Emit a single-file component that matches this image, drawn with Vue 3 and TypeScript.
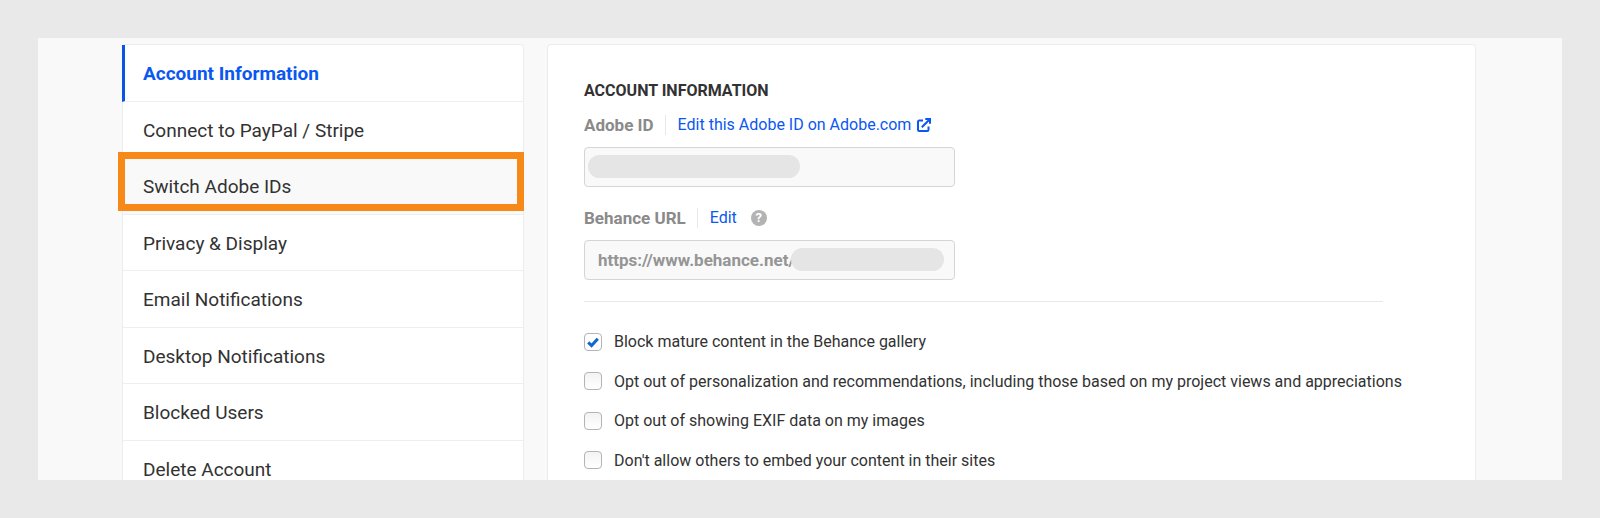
<script setup lang="ts">
import { ref } from 'vue'

interface NavItem {
  label: string
  state?: 'active' | 'highlighted'
}

interface Preference {
  id: string
  label: string
  checked: boolean
}

const navItems: NavItem[] = [
  { label: 'Account Information', state: 'active' },
  { label: 'Connect to PayPal / Stripe' },
  { label: 'Switch Adobe IDs', state: 'highlighted' },
  { label: 'Privacy & Display' },
  { label: 'Email Notifications' },
  { label: 'Desktop Notifications' },
  { label: 'Blocked Users' },
  { label: 'Delete Account' },
]

const preferences = ref<Preference[]>([
  { id: 'mature', label: 'Block mature content in the Behance gallery', checked: true },
  {
    id: 'personalization',
    label: 'Opt out of personalization and recommendations, including those based on my project views and appreciations',
    checked: false,
  },
  { id: 'exif', label: 'Opt out of showing EXIF data on my images', checked: false },
  { id: 'embed', label: "Don't allow others to embed your content in their sites", checked: false },
])
</script>

<template>
  <div class="stage">
    <div class="page">
      <nav class="card sidebar">
        <ul class="nav-list">
          <li v-for="item in navItems" :key="item.label" class="nav-item" :class="item.state">
            <a href="#" class="nav-link">{{ item.label }}</a>
          </li>
        </ul>
      </nav>

      <main class="card content">
        <h1 class="title">Account Information</h1>

        <div class="field">
          <div class="field-head">
            <label for="adobe-id" class="field-label">Adobe ID</label>
            <a href="#" class="link">
              Edit this Adobe ID on Adobe.com
              <svg class="external" viewBox="0 0 14 14" aria-hidden="true">
                <path d="M6 2.5H2.2a1.2 1.2 0 0 0-1.2 1.2v8.1A1.2 1.2 0 0 0 2.2 13h8.1a1.2 1.2 0 0 0 1.2-1.2V8.5" />
                <path d="M4.8 9.2 12 2" />
                <path d="M8.3 1H13v4.7" />
              </svg>
            </a>
          </div>
          <div class="input-wrap">
            <input id="adobe-id" class="input" type="text" readonly />
            <span class="mask mask-id"></span>
          </div>
        </div>

        <div class="field">
          <div class="field-head">
            <label for="behance-url" class="field-label">Behance URL</label>
            <a href="#" class="link">Edit</a>
            <button type="button" class="help" aria-label="Help">?</button>
          </div>
          <div class="input-wrap">
            <input id="behance-url" class="input" type="text" value="https://www.behance.net/" readonly />
            <span class="mask mask-url"></span>
          </div>
        </div>

        <hr class="rule" />

        <ul class="prefs">
          <li v-for="pref in preferences" :key="pref.id" class="pref">
            <input :id="pref.id" v-model="pref.checked" class="check" type="checkbox" />
            <svg v-if="pref.checked" class="tick" viewBox="0 0 18 18" aria-hidden="true">
              <path d="M4.2 9.3 7.6 12.6 13.8 5.8" />
            </svg>
            <label :for="pref.id">{{ pref.label }}</label>
          </li>
        </ul>
      </main>
    </div>
  </div>
</template>

<style>
body {
  margin: 0;
  background: #e9e9e9;
}
</style>

<style scoped>
.stage {
  box-sizing: border-box;
  height: 100vh;
  padding: 38px;
  background: #e9e9e9;
  color: #323232;
  font-family: Roboto, "Liberation Sans", sans-serif;
  font-size: 16px;
}

.page {
  box-sizing: border-box;
  display: flex;
  gap: 23px;
  height: 100%;
  padding: 6px 86px 0 84px;
  background: #f9f9f9;
  overflow: hidden;
}

.card {
  box-sizing: border-box;
  background: #fff;
  border: 1px solid #ececec;
  border-bottom: 0;
  border-radius: 4px 4px 0 0;
}

.sidebar {
  flex: 0 0 402px;
}

.nav-list {
  display: grid;
  grid-auto-rows: 1fr;
  min-height: 452px;
  margin: 0;
  padding: 0;
  list-style: none;
}

.nav-item {
  position: relative;
  display: flex;
  border-bottom: 1px solid #eeeeee;
}

.nav-link {
  flex: 1;
  display: flex;
  align-items: center;
  padding: 2px 20px 0;
  color: #323232;
  font-size: 19px;
  text-decoration: none;
}

.active {
  margin-left: -1px;
  border-left: 3px solid #0a55e8;
}

.active .nav-link {
  padding-left: 18px;
  color: #0a57f2;
  font-weight: 700;
}

.highlighted .nav-link {
  background: #f9f9f9;
}

/* Call-out frame drawn over the neighbouring rows. */
.highlighted::after {
  content: "";
  position: absolute;
  inset: -6px -1px 3px -5px;
  border: 7px solid #f68917;
  pointer-events: none;
}

.content {
  flex: 1;
  min-width: 0;
  padding: 35px 36px 0;
}

.title {
  margin: 0 0 12px;
  font-size: 16px;
  line-height: 22px;
  font-weight: 700;
  text-transform: uppercase;
}

.field {
  margin-bottom: 20px;
}

.field-head {
  display: flex;
  align-items: center;
  height: 22px;
  margin-bottom: 11px;
}

.field-label {
  margin-right: 11px;
  color: #8a8a8a;
  font-size: 17px;
  font-weight: 700;
}

.link {
  display: flex;
  align-items: center;
  gap: 6px;
  padding-left: 12px;
  border-left: 1px solid #e8e8e8;
  line-height: 20px;
  color: #0a57f2;
  text-decoration: none;
}

.external {
  width: 14px;
  height: 14px;
  fill: none;
  stroke: currentColor;
  stroke-width: 2;
}

.help {
  width: 16px;
  height: 16px;
  margin-left: 14px;
  padding: 0;
  border: 0;
  border-radius: 50%;
  background: #b3b3b3;
  color: #fff;
  font: 700 13px/16px Roboto, "Liberation Sans", sans-serif;
  text-align: center;
}

.input-wrap {
  position: relative;
  max-width: 371px;
}

.input {
  box-sizing: border-box;
  display: block;
  width: 100%;
  height: 40px;
  padding: 0 13px;
  border: 1px solid #d5d5d5;
  border-radius: 4px;
  background: #f9f9f9;
  color: #959595;
  font: 700 17px Roboto, "Liberation Sans", sans-serif;
  outline: none;
}

.mask {
  position: absolute;
  top: 8px;
  height: 23px;
  border-radius: 12px;
  background: #e5e5e5;
}

.mask-id {
  left: 4px;
  width: 212px;
}

.mask-url {
  right: 11px;
  width: 153px;
}

.rule {
  height: 1px;
  margin: 21px 56px 20px 0;
  border: 0;
  background: #e8e8e8;
}

.prefs {
  display: grid;
  grid-auto-rows: 1fr;
  min-height: 158px;
  margin: 0;
  padding: 0;
  list-style: none;
}

.pref {
  position: relative;
  display: flex;
  align-items: center;
  gap: 12px;
  white-space: nowrap;
}

.check {
  appearance: none;
  box-sizing: border-box;
  flex: none;
  width: 18px;
  height: 18px;
  margin: 0;
  border: 1px solid #b4b4b4;
  border-radius: 4px;
  background: linear-gradient(#f3f3f3, #fff);
}

.check:checked {
  background: #fff;
}

.tick {
  position: absolute;
  left: 0;
  width: 18px;
  height: 18px;
  fill: none;
  stroke: #1464d2;
  stroke-width: 3;
  pointer-events: none;
}
</style>
